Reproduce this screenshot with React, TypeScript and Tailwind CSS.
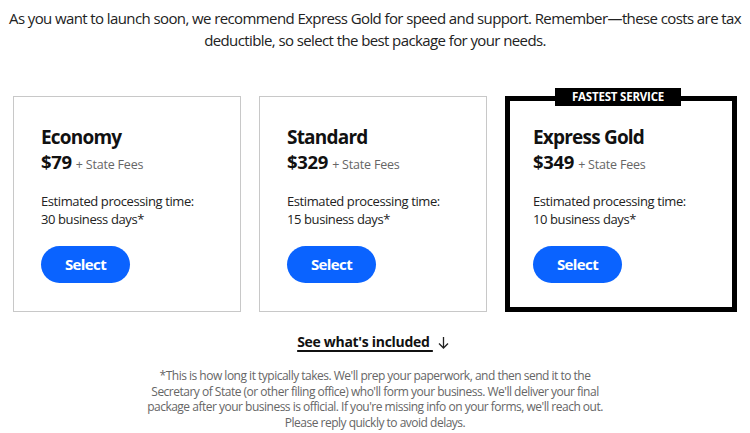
import React from "react";

const plans = [
  { name: "Economy", price: "$79", days: "30 business days*", featured: false },
  { name: "Standard", price: "$329", days: "15 business days*", featured: false },
  { name: "Express Gold", price: "$349", days: "10 business days*", featured: true },
];

function PlanCard({ plan }: { plan: (typeof plans)[number] }) {
  return (
    <div
      className={`relative h-[216px] bg-white ${
        plan.featured
          ? "w-[232px] border-[5px] border-black pl-[23px] pt-[23px]"
          : "w-[228px] border border-[#c8c8c8] pl-[27px] pt-[27px]"
      }`}
    >
      {plan.featured && (
        <div className="absolute left-[45px] top-[-13px] flex h-[18px] w-[126px] items-center justify-center bg-black text-[11.5px] font-bold tracking-[-0.2px] text-white">
          FASTEST SERVICE
        </div>
      )}
      <div className="text-[19px] font-bold leading-[26px] tracking-[-0.8px] text-[#111]">{plan.name}</div>
      <div className="flex items-baseline">
        <span className="text-[18.5px] font-bold leading-[24px] tracking-[-0.3px] text-[#111]">{plan.price}</span>
        <span className="ml-[4px] text-[12.5px] tracking-[-0.2px] text-[#666]">+ State Fees</span>
      </div>
      <div className="mt-[17px] text-[13px] leading-[18px] tracking-[-0.4px] text-[#222]">
        <div>Estimated processing time:</div>
        <div>{plan.days}</div>
      </div>
      <button className="mt-[18px] flex h-[37px] w-[89px] items-center justify-center rounded-full bg-[#0a63ff] text-[15px] font-bold tracking-[-0.6px] text-white">
        Select
      </button>
    </div>
  );
}

export default function App() {
  return (
    <div className="h-[433px] w-[750px] overflow-hidden bg-white font-['Open_Sans',sans-serif]">
      <p className="pt-[7px] text-center text-[15px] leading-[22px] tracking-[-0.6px] text-[#222]">
        As you want to launch soon, we recommend Express Gold for speed and support. Remember—these costs are tax
        deductible, so select the best package for your needs.
      </p>
      <div className="mt-[45px] flex gap-[18px] px-[13px]">
        {plans.map((p) => (
          <PlanCard key={p.name} plan={p} />
        ))}
      </div>
      <div className="mt-[19px] flex items-center justify-center pr-[4px] text-[14px] font-bold tracking-[-0.3px] text-[#111]">
        <span className="underline decoration-[1.5px] underline-offset-[3px]">See what's included&nbsp;</span>
        <svg className="ml-[5px] mt-[2px]" width="11" height="13" viewBox="0 0 11 13" fill="none">
          <path d="M5.5 1v11M1 7.5l4.5 4.5 4.5-4.5" stroke="#222" strokeWidth="1.3" />
        </svg>
      </div>
      <p className="mx-auto mt-[16px] w-[464px] text-center text-[12px] leading-[15.5px] tracking-[-0.5px] text-[#666]">
        *This is how long it typically takes. We'll prep your paperwork, and then send it to the Secretary of State (or
        other filing office) who'll form your business. We'll deliver your final package after your business is
        official. If you're missing info on your forms, we'll reach out. Please reply quickly to avoid delays.
      </p>
    </div>
  );
}
